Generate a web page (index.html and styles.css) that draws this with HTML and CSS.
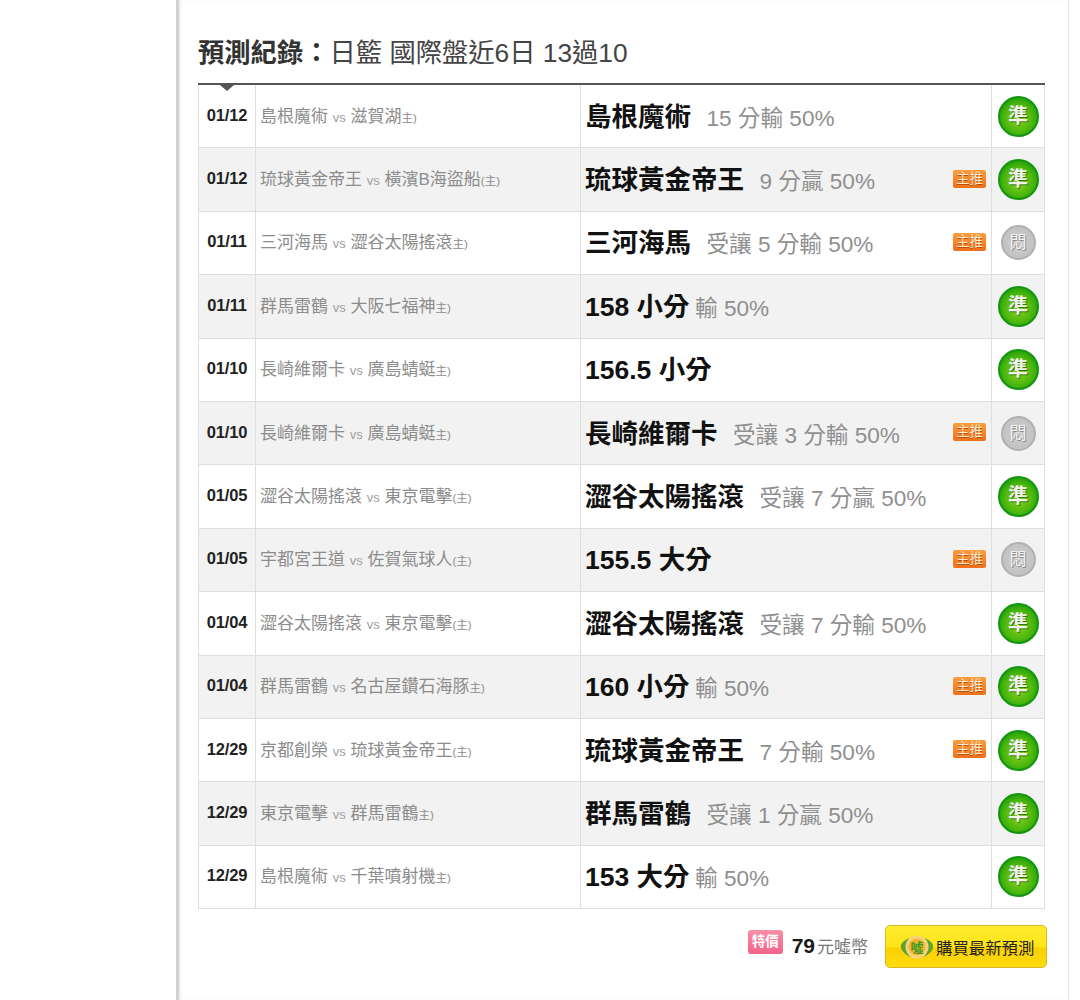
FILE: index.html
```html
<!DOCTYPE html>
<html lang="zh-Hant">
<head>
<meta charset="utf-8">
<title>預測紀錄</title>
<link rel="stylesheet" href="styles.css">
</head>
<body>
<main class="page">
  <h1 class="title"><b>預測紀錄：</b>日籃 國際盤近6日 13過10</h1>
  <table class="records">
    <colgroup><col class="c-date"><col class="c-match"><col class="c-pick"><col class="c-res"></colgroup>
    <tbody>
      <tr>
        <td class="date first"><span class="caret"></span>01/12</td>
        <td class="match">島根魔術 <small>vs</small> 滋賀湖<i>主)</i></td>
        <td class="pick"><div class="pick-in"><span><b>島根魔術</b> <em>15 分輸 50%</em></span></div></td>
        <td class="res"><span class="zhun">準</span></td>
      </tr>
      <tr>
        <td class="date">01/12</td>
        <td class="match">琉球黃金帝王 <small>vs</small> 橫濱B海盜船<i>(主)</i></td>
        <td class="pick"><div class="pick-in"><span><b>琉球黃金帝王</b> <em>9 分贏 50%</em></span><span class="main">主推</span></div></td>
        <td class="res"><span class="zhun">準</span></td>
      </tr>
      <tr>
        <td class="date">01/11</td>
        <td class="match">三河海馬 <small>vs</small> 澀谷太陽搖滾<i>主)</i></td>
        <td class="pick"><div class="pick-in"><span><b>三河海馬</b> <em>受讓 5 分輸 50%</em></span><span class="main">主推</span></div></td>
        <td class="res"><span class="wen">悶</span></td>
      </tr>
      <tr>
        <td class="date">01/11</td>
        <td class="match">群馬雷鶴 <small>vs</small> 大阪七福神<i>主)</i></td>
        <td class="pick"><div class="pick-in"><span><b>158 小分</b> <em class="tight">輸 50%</em></span></div></td>
        <td class="res"><span class="zhun">準</span></td>
      </tr>
      <tr>
        <td class="date">01/10</td>
        <td class="match">長崎維爾卡 <small>vs</small> 廣島蜻蜓<i>主)</i></td>
        <td class="pick"><div class="pick-in"><span><b>156.5 小分</b></span></div></td>
        <td class="res"><span class="zhun">準</span></td>
      </tr>
      <tr>
        <td class="date">01/10</td>
        <td class="match">長崎維爾卡 <small>vs</small> 廣島蜻蜓<i>主)</i></td>
        <td class="pick"><div class="pick-in"><span><b>長崎維爾卡</b> <em>受讓 3 分輸 50%</em></span><span class="main">主推</span></div></td>
        <td class="res"><span class="wen">悶</span></td>
      </tr>
      <tr>
        <td class="date">01/05</td>
        <td class="match">澀谷太陽搖滾 <small>vs</small> 東京電擊<i>(主)</i></td>
        <td class="pick"><div class="pick-in"><span><b>澀谷太陽搖滾</b> <em>受讓 7 分贏 50%</em></span></div></td>
        <td class="res"><span class="zhun">準</span></td>
      </tr>
      <tr>
        <td class="date">01/05</td>
        <td class="match">宇都宮王道 <small>vs</small> 佐賀氣球人<i>(主)</i></td>
        <td class="pick"><div class="pick-in"><span><b>155.5 大分</b></span><span class="main">主推</span></div></td>
        <td class="res"><span class="wen">悶</span></td>
      </tr>
      <tr>
        <td class="date">01/04</td>
        <td class="match">澀谷太陽搖滾 <small>vs</small> 東京電擊<i>(主)</i></td>
        <td class="pick"><div class="pick-in"><span><b>澀谷太陽搖滾</b> <em>受讓 7 分輸 50%</em></span></div></td>
        <td class="res"><span class="zhun">準</span></td>
      </tr>
      <tr>
        <td class="date">01/04</td>
        <td class="match">群馬雷鶴 <small>vs</small> 名古屋鑽石海豚<i>主)</i></td>
        <td class="pick"><div class="pick-in"><span><b>160 小分</b> <em class="tight">輸 50%</em></span><span class="main">主推</span></div></td>
        <td class="res"><span class="zhun">準</span></td>
      </tr>
      <tr>
        <td class="date">12/29</td>
        <td class="match">京都創榮 <small>vs</small> 琉球黃金帝王<i>(主)</i></td>
        <td class="pick"><div class="pick-in"><span><b>琉球黃金帝王</b> <em>7 分輸 50%</em></span><span class="main">主推</span></div></td>
        <td class="res"><span class="zhun">準</span></td>
      </tr>
      <tr>
        <td class="date">12/29</td>
        <td class="match">東京電擊 <small>vs</small> 群馬雷鶴<i>主)</i></td>
        <td class="pick"><div class="pick-in"><span><b>群馬雷鶴</b> <em>受讓 1 分贏 50%</em></span></div></td>
        <td class="res"><span class="zhun">準</span></td>
      </tr>
      <tr>
        <td class="date">12/29</td>
        <td class="match">島根魔術 <small>vs</small> 千葉噴射機<i>主)</i></td>
        <td class="pick"><div class="pick-in"><span><b>153 大分</b> <em class="tight">輸 50%</em></span></div></td>
        <td class="res"><span class="zhun">準</span></td>
      </tr>
    </tbody>
  </table>
  <div class="buy">
    <span class="special">特價</span>
    <span class="price"><b>79</b>元噓幣</span>
    <a class="buy-btn">
      <svg class="logo" viewBox="0 0 34 26" width="34" height="26" aria-hidden="true">
        <path d="M9 4 C3 7 0 10 1 14 C3 19 7 22 12 23 C8 18 7 10 9 4Z" fill="#5da52c"/>
        <path d="M25 4 C31 7 34 10 33 14 C31 19 27 22 22 23 C26 18 27 10 25 4Z" fill="#5da52c"/>
        <circle cx="17" cy="13" r="11.5" fill="#f6d27a"/>
        <circle cx="17" cy="13" r="8.5" fill="#f9b52e"/>
        <text x="17" y="17.5" text-anchor="middle" class="logo-text">噓</text>
      </svg>
      購買最新預測
    </a>
  </div>
</main>
</body>
</html>
```
FILE: styles.css
```css
html, body { margin: 0; padding: 0; background: #fff; }
body { height: 1000px; overflow: hidden; font-family: "Liberation Sans", "Noto Sans CJK TC", sans-serif; }
.page {
  box-sizing: border-box;
  margin-left: 176px;
  width: 893px;
  height: 1000px;
  border-left: 3px solid #d2d2d2;
  border-right: 1px solid #e4e4e4;
  box-shadow: inset 2px 0 2px #efefef;
  padding: 37px 24px 0 19px;
}
.title { margin: 0 0 13px; font-size: 26.3px; line-height: 33px; font-weight: 400; color: #444; white-space: nowrap; }
.title b { font-weight: 700; color: #333; }
.records {
  width: 846px;
  table-layout: fixed;
  border-collapse: collapse;
  border-top: 2px solid #555;
}
.c-date { width: 57px; }
.c-match { width: 325px; }
.c-pick { width: 411px; }
.c-res { width: 53px; }
.records td { height: 63.4px; box-sizing: border-box; border: 1px solid #dedede; padding: 0; white-space: nowrap; overflow: hidden; }
.records tr:first-child td { border-top: 0; height: 63.9px; }
.records tr:nth-child(even) td { background: #f2f2f2; }
.records td.date { font-size: 16.5px; font-weight: 700; color: #222; text-align: center; letter-spacing: -0.2px; padding-bottom: 2px; }
.date.first { position: relative; overflow: visible !important; }
.caret {
  position: absolute; left: 21px; top: 0; width: 0; height: 0;
  border-left: 7px solid transparent; border-right: 7px solid transparent;
  border-top: 6px solid #555;
}
.records td.match { font-size: 17px; color: #8c8c8c; padding: 0 0 4px 4px; }
.match small { font-size: 13px; color: #a0a0a0; }
.match i { font-style: normal; font-size: 11.5px; }
.pick-in { display: flex; align-items: center; justify-content: space-between; padding: 0 5px 4px 4px; }
.pick b { font-size: 26.5px; font-weight: 700; color: #111; }
.pick em { font-style: normal; font-size: 22.6px; color: #8f8f8f; margin-left: 11px; }
.pick em.tight { margin-left: 1px; }
.main {
  flex: none;
  width: 33px; height: 18px;
  margin-top: 2px;
  border-radius: 2px;
  background: linear-gradient(#fb9e3e, #ef6f1a);
  color: #fde9cc;
  font-size: 13.5px; line-height: 18px; text-align: center;
  text-shadow: 0 1px 0 #b8500c;
}
.res { text-align: center; }
.zhun, .wen { display: inline-block; box-sizing: border-box; border-radius: 50%; text-align: center; vertical-align: middle; font-weight: 700; }
.zhun {
  width: 41px; height: 41px; line-height: 37px;
  background: radial-gradient(circle at 50% 55%, #8ed31a 0%, #4fb80f 50%, #159a0a 85%, #0f8a0a 100%);
  border: 2px solid #12960f;
  color: #f2f2ea; font-size: 20px;
  text-shadow: 1px 1px 0 #2b7a0a;
}
.wen {
  width: 35px; height: 35px; line-height: 31px;
  background: radial-gradient(circle at 50% 50%, #cfcfcf 0%, #bdbdbd 100%);
  border: 2px solid #b0b0b0;
  color: #f2f2f2; font-size: 17px; font-weight: 400;
  text-shadow: 1px 1px 0 #8c8c8c;
}
.buy { display: flex; align-items: center; justify-content: flex-end; margin: 16px -3px 0 0; height: 43px; }
.special {
  width: 35px; height: 24px; margin-top: -10px;
  border-radius: 3px;
  background: linear-gradient(#f98fa8, #f2648a);
  color: #fff; font-size: 13.5px; line-height: 24px; text-align: center; font-weight: 700;
}
.price { margin: -2px 17px 0 9px; font-size: 17px; color: #777; }
.price b { font-size: 21px; color: #1a1a1a; margin-right: 2px; }
.buy-btn {
  box-sizing: border-box;
  display: flex; align-items: center;
  width: 162px; height: 43px;
  padding-left: 14px;
  border: 1px solid #d8b81c;
  border-radius: 5px;
  background: linear-gradient(#ffec2e 0%, #ffe41a 50%, #fad000 54%, #ffdc10 100%);
  color: #222; font-size: 16.4px; white-space: nowrap;
}
.logo { flex: none; margin-right: 2px; }
.logo-text { font-size: 13px; font-weight: 700; fill: #3f9a2a; }
```
